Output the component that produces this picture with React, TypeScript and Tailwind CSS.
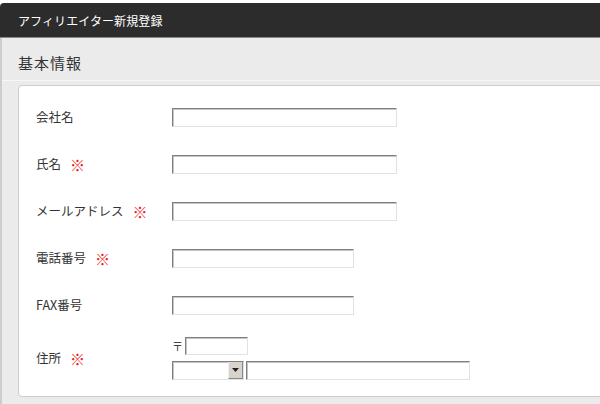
import React from "react";

const font = { fontFamily: '"Noto Sans CJK JP", "Noto Sans", sans-serif' };

function TextInput({ w }: { w: string }) {
  return (
    <div
      className={`${w} h-[19px] bg-white border border-t-[#808080] border-l-[#808080] border-r-[#e2e2e2] border-b-[#e2e2e2] shadow-[inset_1px_1px_0_#c4c4c4]`}
    />
  );
}

function Req() {
  return <span className="ml-[9px] text-[#ec1c24] text-[15px] font-bold leading-none">※</span>;
}

function Row({ label, req, children }: { label: string; req?: boolean; children: React.ReactNode }) {
  return (
    <div className="flex items-center">
      <div className="w-[136px] flex items-center text-[12.5px] text-[#333] leading-none">
        <span>{label}</span>
        {req && <Req />}
      </div>
      {children}
    </div>
  );
}

export default function App() {
  return (
    <div className="w-[600px] h-[404px] overflow-hidden bg-white pt-[3px]" style={font}>
      <div className="w-[620px]">
        <div className="h-[35px] bg-[#2c2c2c] rounded-tl-[4px] border-b border-[#8a8a8a] flex items-center pl-[18px] pt-[1px]">
          <span className="text-white text-[12px] tracking-[0.1px]">アフィリエイター新規登録</span>
        </div>
        <div className="bg-[#ebebeb] border-l-2 border-[#cdcdcd] h-[400px]">
          <div className="h-[43px] flex items-center pl-[16px] pt-[9px] border-b border-[#f6f6f6]">
            <span className="text-[15px] text-[#333] tracking-[1px]">基本情報</span>
          </div>
          <div className="mt-[4px] ml-[16px] bg-white border border-[#cccccc] rounded-[4px] pl-[17px] pt-[22px] pb-[16px] flex flex-col gap-[28px]">
            <Row label="会社名">
              <TextInput w="w-[225px]" />
            </Row>
            <Row label="氏名" req>
              <TextInput w="w-[225px]" />
            </Row>
            <Row label="メールアドレス" req>
              <TextInput w="w-[225px]" />
            </Row>
            <Row label="電話番号" req>
              <TextInput w="w-[182px]" />
            </Row>
            <Row label="FAX番号">
              <TextInput w="w-[182px]" />
            </Row>
            <div className="-mt-[6px]">
              <Row label="住所" req>
                <div className="flex flex-col gap-[6px]">
                  <div className="flex items-center">
                    <span className="text-[11px] text-[#444] w-[13px] leading-none">〒</span>
                    <div className="w-[63px] h-[18px] bg-white border border-t-[#808080] border-l-[#808080] border-r-[#e2e2e2] border-b-[#e2e2e2] shadow-[inset_1px_1px_0_#c4c4c4]" />
                  </div>
                  <div className="flex items-center gap-[2px]">
                    <div className="w-[72px] h-[19px] bg-white border border-t-[#808080] border-l-[#808080] border-r-[#e2e2e2] border-b-[#e2e2e2] shadow-[inset_1px_1px_0_#c4c4c4] flex justify-end">
                      <div className="w-[15px] h-full bg-[#d8d4cc] border-l border-[#f0f0f0] border-r border-r-[#888] border-b border-b-[#888] flex items-center justify-center">
                        <svg width="7" height="4" viewBox="0 0 7 4">
                          <path d="M0 0 H7 L3.5 4 Z" fill="#222" />
                        </svg>
                      </div>
                    </div>
                    <TextInput w="w-[224px]" />
                  </div>
                </div>
              </Row>
            </div>
          </div>
        </div>
      </div>
    </div>
  );
}
